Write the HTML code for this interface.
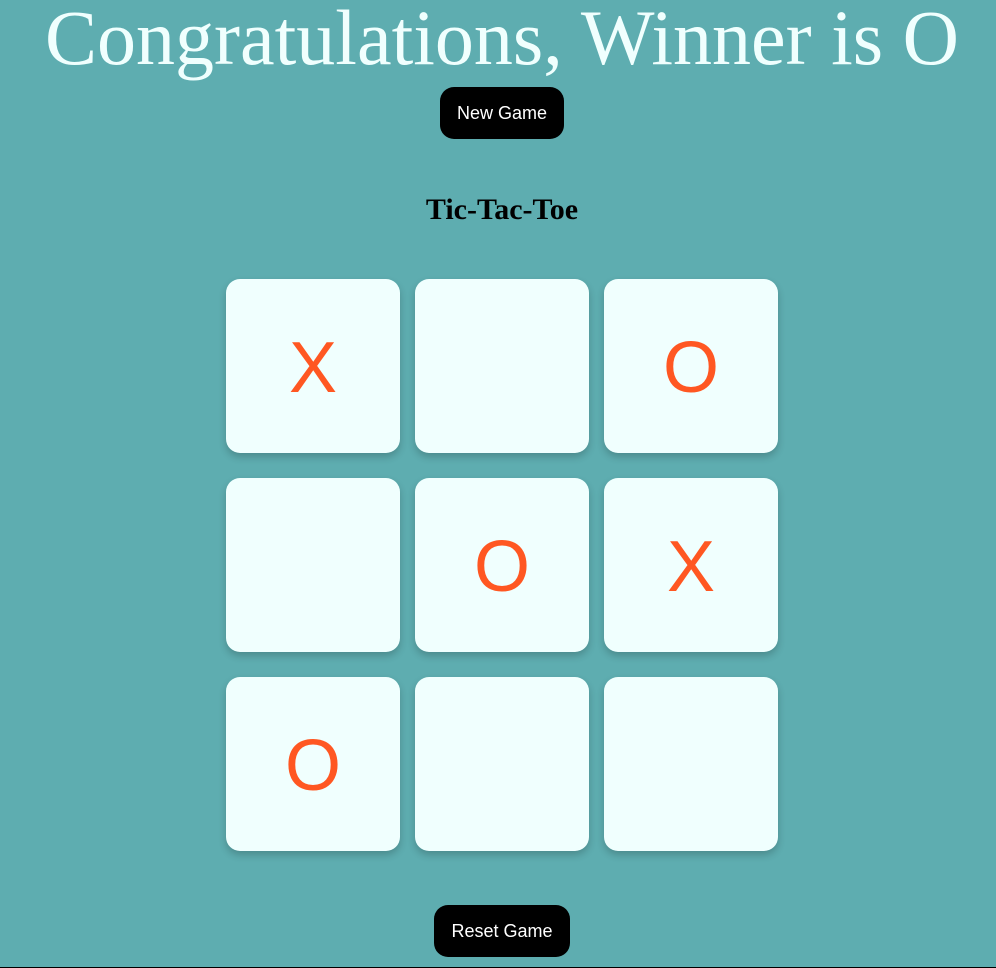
<!DOCTYPE html>
<html><head><style>
html,body{margin:0;padding:0}
body{width:996px;height:968px;background:#5eadb0;position:relative;overflow:hidden;font-family:"Liberation Sans",Arial,sans-serif}
h1{position:absolute;left:4px;width:996px;top:-7px;margin:0;text-align:center;font-family:"Liberation Serif",serif;font-weight:normal;font-size:78px;color:#f0fffe;line-height:90px;white-space:nowrap;letter-spacing:0px}
.btn{position:absolute;background:#000;color:#fff;border-radius:14px;font-size:18px;display:flex;align-items:center;justify-content:center}
h2{position:absolute;left:0;width:1004px;top:193px;margin:0;text-align:center;font-family:"Liberation Serif",serif;font-size:30px;line-height:34px;color:#000}
.c{position:absolute;width:174px;height:174px;background:#f0fffe;border-radius:14px;box-shadow:0 4px 8px rgba(0,0,0,.2);color:#ff5722;font-size:72px;display:flex;align-items:center;justify-content:center;padding-top:4px;box-sizing:border-box}
.line{position:absolute;left:0;top:967px;width:996px;height:1px;background:#000}
</style></head><body>
<h1>Congratulations, Winner is O</h1>
<div class="btn" style="left:440px;top:87px;width:124px;height:52px">New Game</div>
<h2>Tic-Tac-Toe</h2>
<div class="c" style="left:226px;top:279px">X</div>
<div class="c" style="left:415px;top:279px"></div>
<div class="c" style="left:604px;top:279px">O</div>
<div class="c" style="left:226px;top:478px"></div>
<div class="c" style="left:415px;top:478px">O</div>
<div class="c" style="left:604px;top:478px">X</div>
<div class="c" style="left:226px;top:677px">O</div>
<div class="c" style="left:415px;top:677px"></div>
<div class="c" style="left:604px;top:677px"></div>
<div class="btn" style="left:434px;top:905px;width:136px;height:52px">Reset Game</div>
<div class="line"></div>
</body></html>
